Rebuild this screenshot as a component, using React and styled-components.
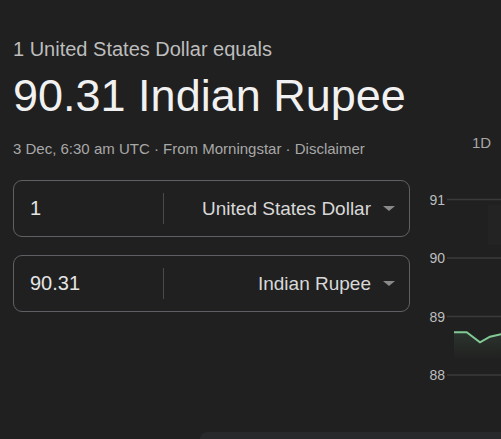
import styled, { createGlobalStyle } from 'styled-components';

const GlobalStyle = createGlobalStyle`
    html, body {
        margin: 0;
        padding: 0;
        background: #202020;
    }
    body {
        font-family: "Liberation Sans", Arial, sans-serif;
    }
`;

const App = () => {
    return (
        <Page>
            <GlobalStyle />
            <Eyebrow>1 United States Dollar equals</Eyebrow>
            <Title>90.31 Indian Rupee</Title>
            <Body>
                <Converter>
                    <Meta>3 Dec, 6:30 am UTC · From Morningstar · Disclaimer</Meta>
                    <Field amount="1" currency="United States Dollar" />
                    <Field amount="90.31" currency="Indian Rupee" />
                </Converter>
                <ChartColumn>
                    <Tabs>
                        <Tab>1D</Tab>
                    </Tabs>
                    <Chart />
                </ChartColumn>
            </Body>
            <BottomCard />
        </Page>
    );
};

const Field = ({ amount, currency }) => {
    return (
        <FieldBox>
            <Amount>{amount}</Amount>
            <Divider />
            <Select>
                <span>{currency}</span>
                <Caret />
            </Select>
        </FieldBox>
    );
};

const Chart = () => {
    const ticks = [
        { label: '91', y: 29.5 },
        { label: '90', y: 88 },
        { label: '89', y: 146.5 },
        { label: '88', y: 205 },
    ];
    const line = 'M26 162.3 L38.7 162.3 L52 172.3 L62 166.7 L73 164.3 L100 163.5';
    return (
        <ChartSvg width="100" height="230" viewBox="0 0 100 230">
            <defs>
                <linearGradient id="fill" x1="0" y1="0" x2="0" y2="1">
                    <stop offset="0" stopColor="#81c995" stopOpacity="0.12" />
                    <stop offset="1" stopColor="#81c995" stopOpacity="0" />
                </linearGradient>
            </defs>
            <rect x="60" y="35" width="13" height="40" fill="#232323" />
            {ticks.map((t) => (
                <g key={t.label}>
                    <line x1="19" x2="100" y1={t.y} y2={t.y} stroke="#3a3a3a" strokeWidth="1.5" />
                    <text x="17" y={t.y + 5} textAnchor="end" fontSize="14" fill="#bdbdbd">
                        {t.label}
                    </text>
                </g>
            ))}
            <path d={line + ' L100 190 L26 190 Z'} fill="url(#fill)" />
            <path d={line} fill="none" stroke="#81c995" strokeWidth="2" />
        </ChartSvg>
    );
};

export default App;

const Page = styled.div`
    width: 501px;
    height: 439px;
    overflow: hidden;
    padding-left: 13px;
    box-sizing: border-box;
    background: #202020;
    color: #e8eaed;
    display: flex;
    flex-direction: column;
`;

const Eyebrow = styled.div`
    margin-top: 37px;
    font-size: 20px;
    line-height: 24px;
    color: #bdbdbd;
    white-space: nowrap;
`;

const Title = styled.div`
    margin-top: 9px;
    font-size: 45px;
    line-height: 52px;
    color: #f1f1f1;
    white-space: nowrap;
`;

const Body = styled.div`
    display: flex;
    gap: 18px;
`;

const Converter = styled.div`
    width: 397px;
    flex-shrink: 0;
    display: flex;
    flex-direction: column;
    gap: 18px;
`;

const Meta = styled.div`
    margin-top: 18px;
    margin-bottom: 4px;
    font-size: 15px;
    line-height: 18px;
    color: #a8a8a8;
    white-space: nowrap;
`;

const FieldBox = styled.div`
    height: 57px;
    box-sizing: border-box;
    border: 1px solid #5f6063;
    border-radius: 9px;
    display: flex;
    align-items: center;
`;

const Amount = styled.div`
    width: 149px;
    padding-left: 16px;
    box-sizing: border-box;
    font-size: 20px;
    color: #e4e4e4;
`;

const Divider = styled.div`
    width: 1px;
    height: 31px;
    background: #4a4a4a;
`;

const Select = styled.div`
    flex: 1;
    display: flex;
    align-items: center;
    justify-content: flex-end;
    gap: 12px;
    padding-right: 14px;
    font-size: 19px;
    color: #d8d8d8;
    white-space: nowrap;
`;

const Caret = styled.span`
    width: 0;
    height: 0;
    border-left: 6px solid transparent;
    border-right: 6px solid transparent;
    border-top: 5px solid #8a8a8a;
`;

const ChartColumn = styled.div`
    flex-shrink: 0;
    display: flex;
    flex-direction: column;
`;

const Tabs = styled.div`
    margin-top: 12px;
    padding-left: 44px;
    display: flex;
    gap: 24px;
`;

const Tab = styled.div`
    font-size: 15px;
    line-height: 18px;
    color: #a8a8a8;
`;

const ChartSvg = styled.svg`
    display: block;
    margin-top: 18px;
    font-family: "Liberation Sans", Arial, sans-serif;
`;

const BottomCard = styled.div`
    margin-top: auto;
    margin-left: 187px;
    height: 7px;
    background: #28292b;
    border-top-left-radius: 12px;
    flex-shrink: 0;
`;
